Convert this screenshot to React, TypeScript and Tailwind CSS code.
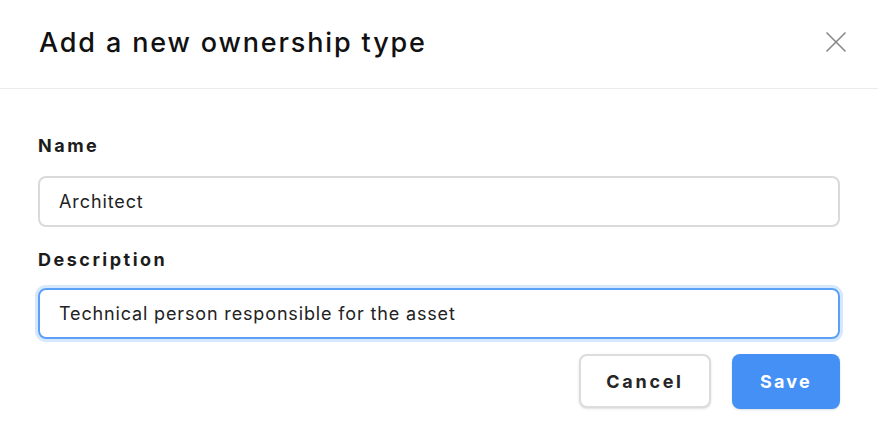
import { X } from "lucide-react";

export default function App() {
  return (
    <div
      className="w-[878px] h-[448px] bg-white flex flex-col text-[#1a1a1a]"
      style={{ fontFamily: "Inter, 'Noto Sans', sans-serif" }}
    >
      {/* Header */}
      <div className="h-[89px] flex items-center justify-between pl-[39px] pr-[24px] border-b border-[#ebebeb]">
        <h1 className="text-[27px] font-medium tracking-[1.85px] text-[#111] -mt-[2px]">
          Add a new ownership type
        </h1>
        <button className="w-9 h-9 flex items-center justify-center text-[#8a8a8a] -mt-[4px]">
          <X size={36} strokeWidth={1.1} />
        </button>
      </div>

      {/* Body */}
      <div className="flex flex-col px-[38px] pt-[45px]">
        <label className="text-[18px] font-bold tracking-[2.5px] text-[#1c1c1c] leading-[24px]">
          Name
        </label>
        <div className="mt-[18px] h-[51px] rounded-[8px] border-2 border-[#dadada] flex items-center px-[19px] text-[18px] tracking-[0.9px] text-[#222]">
          Architect
        </div>

        <label className="mt-[21px] text-[18px] font-bold tracking-[2.5px] text-[#1c1c1c] leading-[24px]">
          Description
        </label>
        <div className="mt-[16px] h-[51px] rounded-[8px] border-2 border-[#5ba0f7] ring-[3px] ring-[#d7e7fc] flex items-center px-[19px] text-[18px] tracking-[0.85px] text-[#222]">
          Technical person responsible for the asset
        </div>

        <div className="mt-[15px] flex justify-end gap-[21px] pr-0">
          <button className="w-[132px] h-[54px] rounded-[8px] border-2 border-[#dcdcdc] bg-white shadow-sm text-[18px] font-bold tracking-[2.7px] text-[#262626]">
            Cancel
          </button>
          <button className="w-[108px] h-[55px] rounded-[8px] bg-[#4590f5] shadow-sm text-[18px] font-bold tracking-[2.2px] text-white">
            Save
          </button>
        </div>
      </div>
    </div>
  );
}
